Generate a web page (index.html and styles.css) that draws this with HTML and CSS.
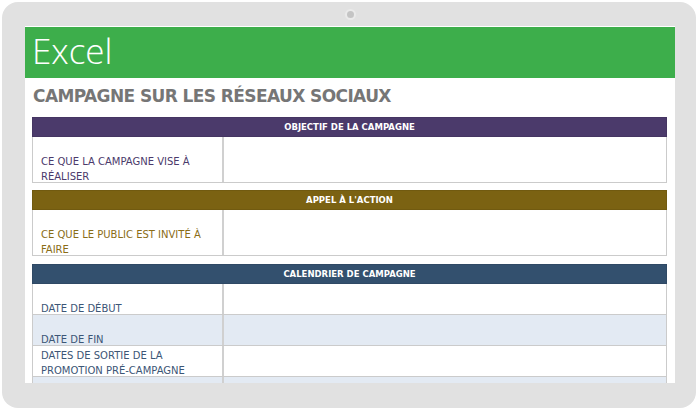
FILE: index.html
```html
<!DOCTYPE html>
<html lang="fr">
<head>
<meta charset="utf-8">
<title>Excel – Campagne sur les réseaux sociaux</title>
<link rel="stylesheet" href="styles.css">
</head>
<body>
<div class="device">
  <div class="bezel-top"><span class="camera"></span></div>
  <div class="screen">
    <div class="app-bar"><span class="app-name">Excel</span></div>
    <h1 class="title">CAMPAGNE SUR LES RÉSEAUX SOCIAUX</h1>
    <div class="sheet">
      <section class="block purple">
        <div class="block-head">OBJECTIF DE LA CAMPAGNE</div>
        <div class="row tall"><div class="label">CE QUE LA CAMPAGNE VISE À<br>RÉALISER</div><div class="value"></div></div>
      </section>
      <section class="block gold">
        <div class="block-head">APPEL À L'ACTION</div>
        <div class="row tall"><div class="label">CE QUE LE PUBLIC EST INVITÉ À<br>FAIRE</div><div class="value"></div></div>
      </section>
      <section class="block blue">
        <div class="block-head">CALENDRIER DE CAMPAGNE</div>
        <div class="row"><div class="label">DATE DE DÉBUT</div><div class="value"></div></div>
        <div class="row alt"><div class="label">DATE DE FIN</div><div class="value"></div></div>
        <div class="row"><div class="label">DATES DE SORTIE DE LA<br>PROMOTION PRÉ-CAMPAGNE</div><div class="value"></div></div>
        <div class="row alt"><div class="label"></div><div class="value"></div></div>
      </section>
    </div>
  </div>
</div>
</body>
</html>
```

FILE: styles.css
```css
* { box-sizing: border-box; }
html, body { margin: 0; padding: 0; background: #ffffff; }
body { width: 700px; height: 412px; overflow: hidden; font-family: "DejaVu Sans", "Liberation Sans", sans-serif; }

.device {
  margin: 2px;
  width: 694px;
  height: 406px;
  background: #e1e1e1;
  border-radius: 16px;
  padding: 0 21px 0 23px;
}
.bezel-top {
  height: 24px;
  display: flex;
  align-items: center;
  justify-content: center;
}
.camera {
  width: 7px; height: 7px;
  border-radius: 50%;
  background: #c4c4c4;
  box-shadow: 0 0 0 2px #eaeaea;
}
.screen {
  width: 650px;
  height: 357px;
  background: #ffffff;
  overflow: hidden;
  padding-top: 1px;
}
.app-bar {
  height: 51px;
  background: #3dae4b;
  display: flex;
  align-items: center;
  padding-left: 7px;
}
.app-name {
  color: #ffffff;
  font-family: "Open Sans", "Noto Sans", sans-serif;
  font-weight: 300;
  font-size: 35px;
  line-height: 1;
  margin-top: -4px;
}
.title {
  margin: 0;
  padding: 8px 0 0 8px;
  height: 39px;
  font-size: 17px;
  font-weight: bold;
  color: #767676;
  letter-spacing: -0.6px;
  line-height: 20px;
}
.sheet {
  margin: 0 8px 0 7px;
  display: flex;
  flex-direction: column;
  gap: 7px;
}
.block.blue { margin-top: 1px; }
.block-head {
  height: 20px;
  color: #ffffff;
  font-size: 8.5px;
  font-weight: bold;
  display: flex;
  align-items: center;
  justify-content: center;
  border: 1px solid rgba(0,0,0,0.08);
}
.purple .block-head { background: #4b3a6b; }
.gold .block-head { background: #7b6212; }
.blue .block-head { background: #33506e; }

.row {
  display: grid;
  grid-template-columns: 189px 1fr;
  height: 31px;
  border: 1px solid #cbcbcb;
  border-top: none;
}
.row.tall { height: 46px; }
.row.alt { background: #e3eaf3; }
.value { border-left: 2px solid #d0d0d0; }
.label {
  font-size: 10px;
  line-height: 15px;
  padding: 0 0 0 8px;
  margin-bottom: -2px;
  display: flex;
  align-items: flex-end;
}
.purple .label { color: #4b3a6b; }
.gold .label { color: #8a6d16; }
.blue .label { color: #3c5676; }
```
